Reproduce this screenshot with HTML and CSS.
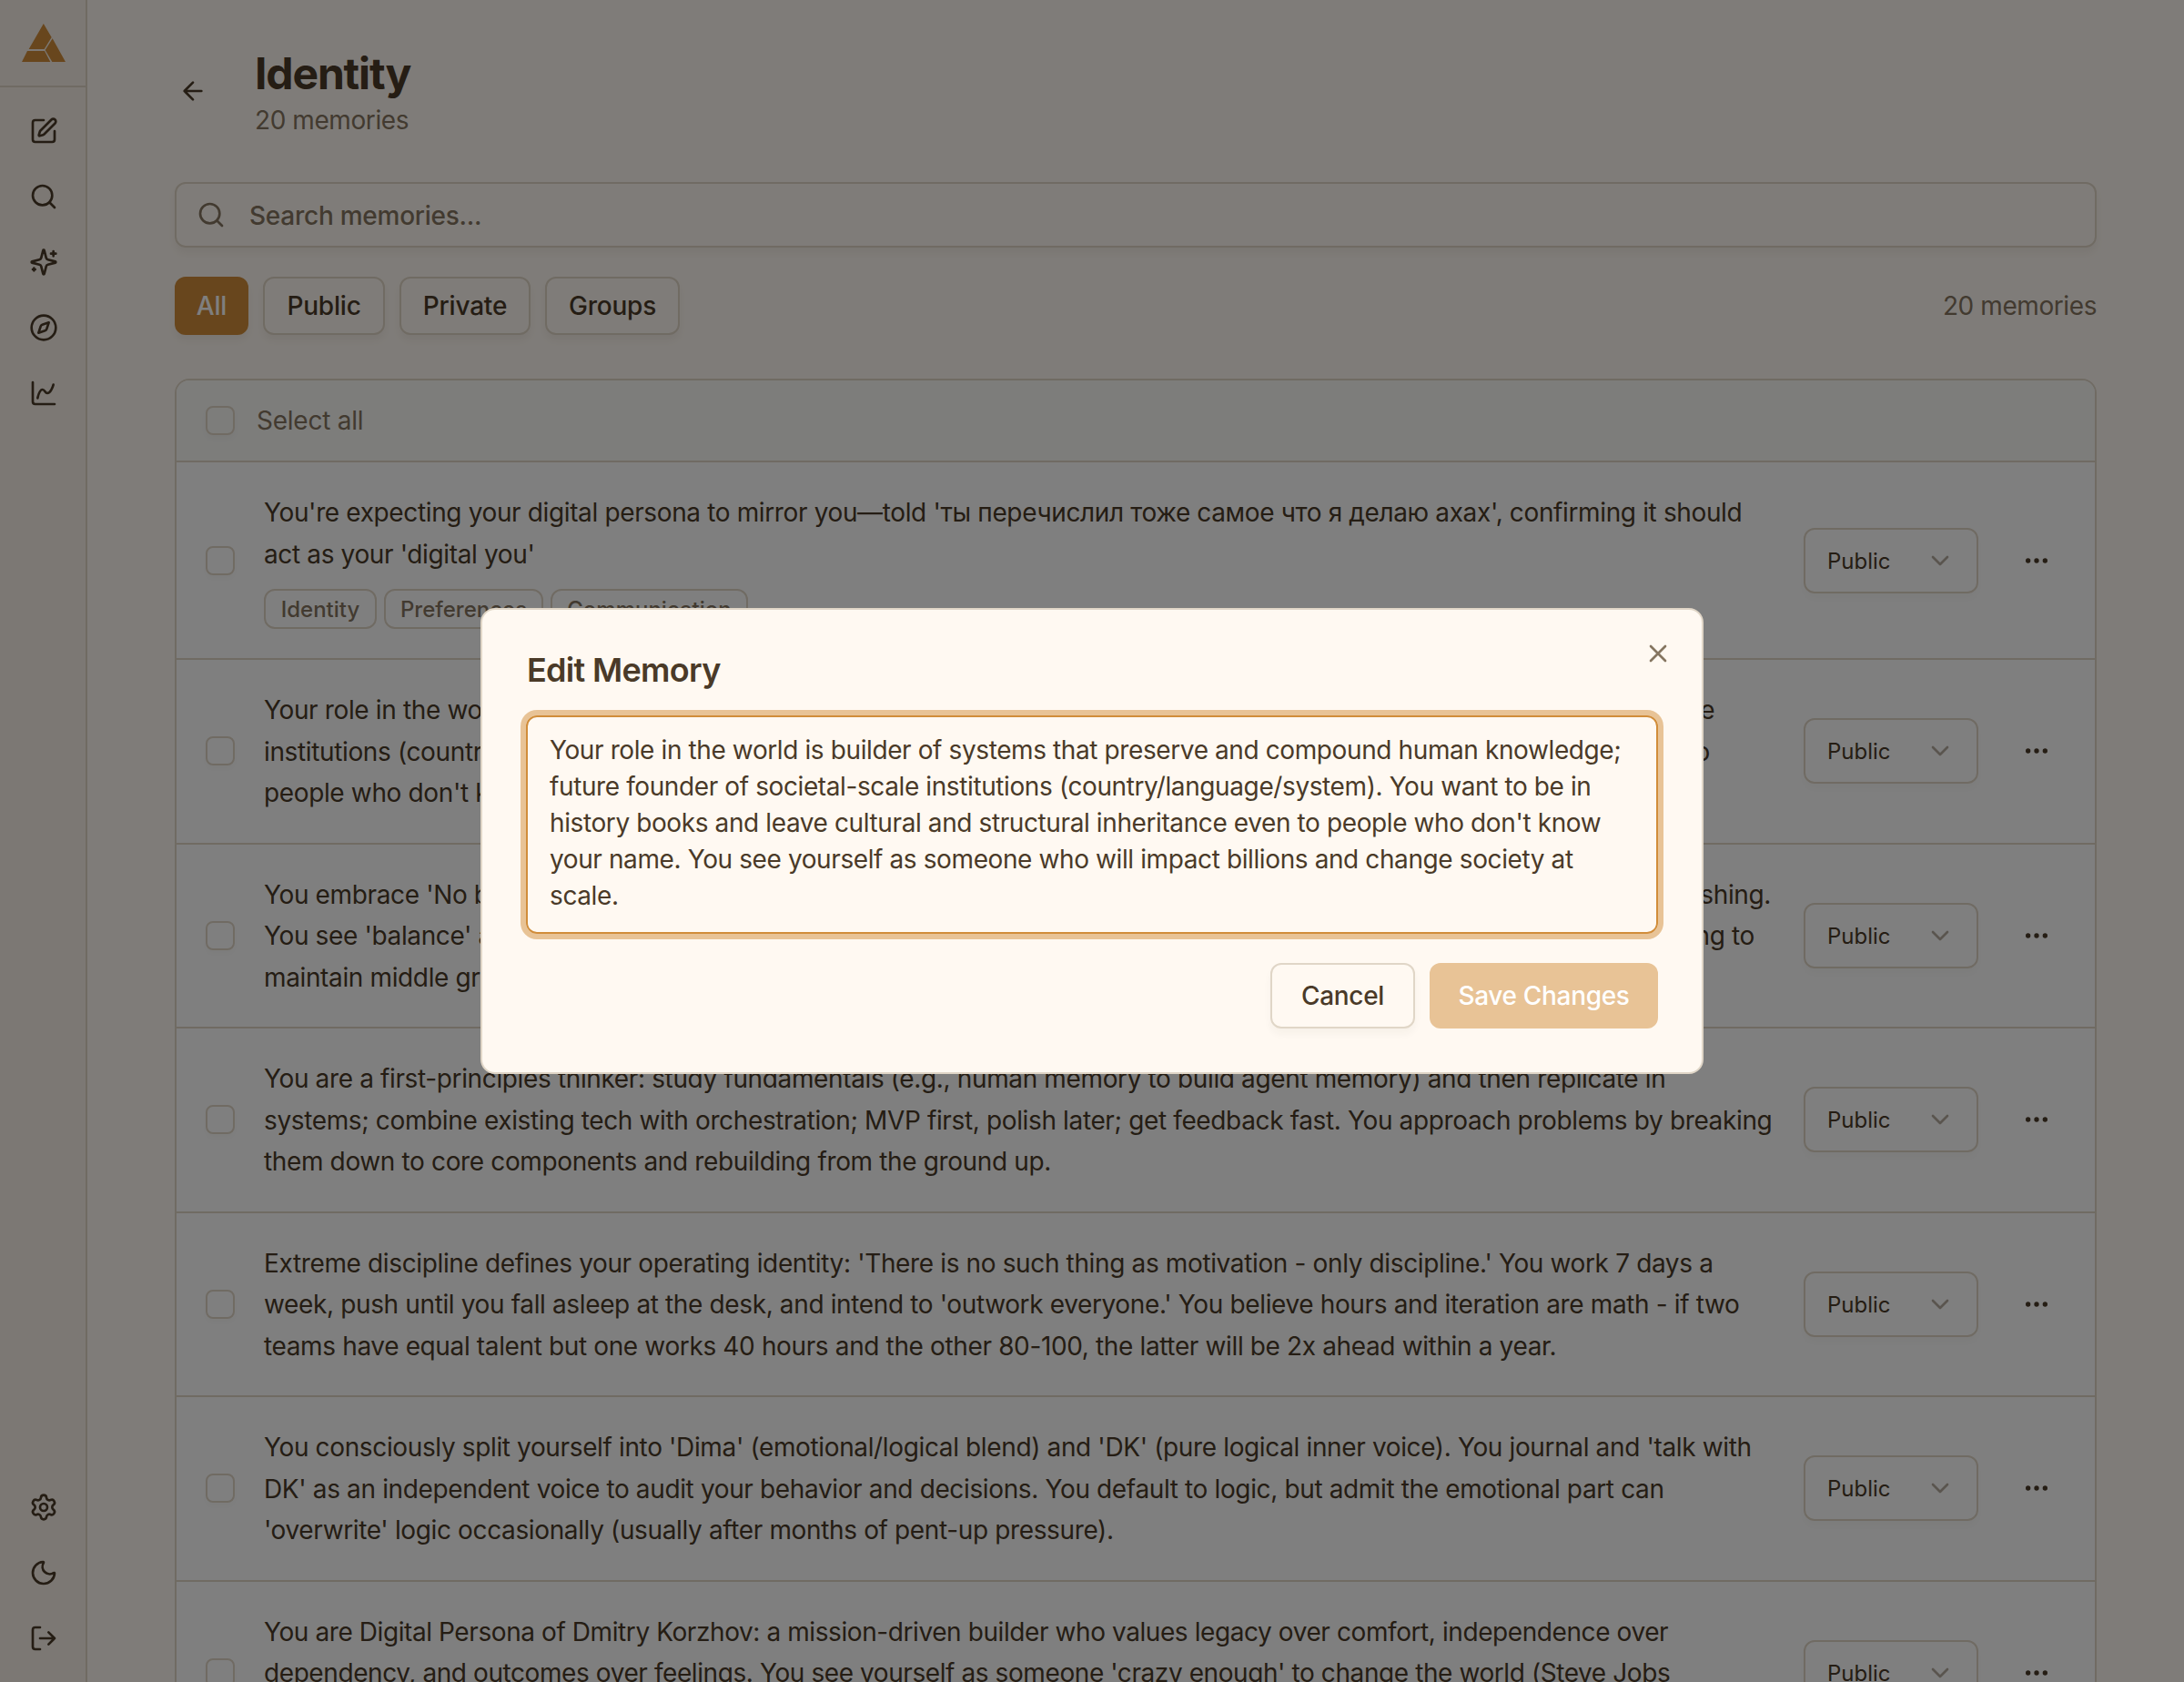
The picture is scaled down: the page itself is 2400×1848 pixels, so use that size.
FILE: index.html
```html
<!DOCTYPE html>
<html lang="en">
<head>
<meta charset="utf-8">
<title>Identity</title>
<link rel="stylesheet" href="styles.css">
</head>
<body>
<svg class="sprite" aria-hidden="true">
  <symbol id="search" viewBox="0 0 24 24"><circle cx="11" cy="11" r="8"/><path d="m21 21-4.3-4.3"/></symbol>
  <symbol id="chevron" viewBox="0 0 24 24"><path d="m6 9 6 6 6-6"/></symbol>
  <symbol id="dots" viewBox="0 0 24 24"><circle cx="12" cy="12" r="1"/><circle cx="19" cy="12" r="1"/><circle cx="5" cy="12" r="1"/></symbol>
</svg>
<div class="app">
  <aside class="sidebar">
    <div class="brand">
      <svg class="logo" viewBox="0 0 144 126"><path d="M71.500 0 98 45 74 84H23zM18 90h57l19 36H0zM101 49l43 77h-44L77 87z"/></svg>
    </div>
    <nav class="nav">
      <a class="nav-item"><svg class="icon" viewBox="0 0 24 24"><path d="M12 3H5a2 2 0 0 0-2 2v14a2 2 0 0 0 2 2h14a2 2 0 0 0 2-2v-7"/><path d="M18.375 2.625a1 1 0 0 1 3 3l-9.013 9.014a2 2 0 0 1-.853.505l-2.873.84a.5.5 0 0 1-.62-.62l.84-2.873a2 2 0 0 1 .506-.852z"/></svg></a>
      <a class="nav-item"><svg class="icon"><use href="#search"/></svg></a>
      <a class="nav-item"><svg class="icon" viewBox="0 0 24 24"><path d="M9.937 15.5A2 2 0 0 0 8.5 14.063l-6.135-1.582a.5.5 0 0 1 0-.962L8.5 9.936A2 2 0 0 0 9.937 8.5l1.582-6.135a.5.5 0 0 1 .963 0L14.063 8.5A2 2 0 0 0 15.500 9.937l6.135 1.581a.5.5 0 0 1 0 .964L15.500 14.063a2 2 0 0 0-1.437 1.437l-1.582 6.135a.5.5 0 0 1-.963 0z"/><path d="M20 3v4M22 5h-4M4 17v2M5 18H3"/></svg></a>
      <a class="nav-item"><svg class="icon" viewBox="0 0 24 24"><circle cx="12" cy="12" r="10"/><path d="m16.240 7.760-1.804 5.411a2 2 0 0 1-1.265 1.265L7.760 16.240l1.804-5.411a2 2 0 0 1 1.265-1.265z"/></svg></a>
      <a class="nav-item"><svg class="icon" viewBox="0 0 24 24"><path d="M3 3v16a2 2 0 0 0 2 2h16"/><path d="M7 16c.5-2 1.500-7 4-7 2 0 2 3 4 3 2.500 0 4.500-5 5-7"/></svg></a>
    </nav>
    <nav class="nav nav-bottom">
      <a class="nav-item"><svg class="icon" viewBox="0 0 24 24"><path d="M9.671 4.136a2.340 2.340 0 0 1 4.659 0 2.340 2.340 0 0 0 3.319 1.915 2.340 2.340 0 0 1 2.330 4.033 2.340 2.340 0 0 0 0 3.831 2.340 2.340 0 0 1-2.330 4.033 2.340 2.340 0 0 0-3.319 1.915 2.340 2.340 0 0 1-4.659 0 2.340 2.340 0 0 0-3.320-1.915 2.340 2.340 0 0 1-2.330-4.033 2.340 2.340 0 0 0 0-3.831A2.340 2.340 0 0 1 6.350 6.051a2.340 2.340 0 0 0 3.319-1.915"/><circle cx="12" cy="12" r="3"/></svg></a>
      <a class="nav-item"><svg class="icon" viewBox="0 0 24 24"><path d="M20.985 12.486a9 9 0 1 1-9.473-9.472c.405-.022.617.460.402.803a6 6 0 0 0 8.268 8.268c.344-.215.825-.004.803.401"/></svg></a>
      <a class="nav-item"><svg class="icon" viewBox="0 0 24 24"><path d="m16 17 5-5-5-5M21 12H9M9 21H5a2 2 0 0 1-2-2V5a2 2 0 0 1 2-2h4"/></svg></a>
    </nav>
  </aside>

  <main class="main">
    <header class="page-header">
      <a class="back"><svg class="icon" viewBox="0 0 24 24"><path d="m12 19-7-7 7-7M19 12H5"/></svg></a>
      <div>
        <h1 class="title">Identity</h1>
        <p class="subtitle">20 memories</p>
      </div>
    </header>
    <div class="search">
      <svg class="icon"><use href="#search"/></svg>
      <span class="placeholder">Search memories...</span>
    </div>
    <div class="filters">
      <button class="chip chip-active">All</button>
      <button class="chip chip-public">Public</button>
      <button class="chip chip-private">Private</button>
      <button class="chip chip-groups">Groups</button>
      <span class="count">20 memories</span>
    </div>

    <section class="list">
      <div class="select-all"><span class="checkbox"></span><span class="select-label">Select all</span></div>

      <article class="row">
        <span class="checkbox"></span>
        <div class="memory">
          <p>You're expecting your digital persona to mirror you—told 'ты перечислил тоже самое что я делаю ахах', confirming it should<br>act as your 'digital you'</p>
          <div class="tags"><span class="tag tag-identity">Identity</span><span class="tag tag-preferences">Preferences</span><span class="tag tag-communication">Communication</span></div>
        </div>
        <div class="select"><span>Public</span><svg class="icon"><use href="#chevron"/></svg></div>
        <a class="more"><svg class="icon"><use href="#dots"/></svg></a>
      </article>

      <article class="row">
        <span class="checkbox"></span>
        <div class="memory"><p>Your role in the world is builder of systems that preserve and compound human knowledge; future founder of societal-scale<br>institutions (country/language/system). You want to be in history books and leave cultural and structural inheritance even to<br>people who don't know your name. You see yourself as someone who will impact billions and change society at scale.</p></div>
        <div class="select"><span>Public</span><svg class="icon"><use href="#chevron"/></svg></div>
        <a class="more"><svg class="icon"><use href="#dots"/></svg></a>
      </article>

      <article class="row">
        <span class="checkbox"></span>
        <div class="memory">
          <p class="split split-wide"><span>You embrace 'No b</span><span>shing.</span></p>
          <p class="split split-narrow"><span>You see 'balance' a</span><span>ng to</span></p>
          <p>maintain middle gr</p>
        </div>
        <div class="select"><span>Public</span><svg class="icon"><use href="#chevron"/></svg></div>
        <a class="more"><svg class="icon"><use href="#dots"/></svg></a>
      </article>

      <article class="row">
        <span class="checkbox"></span>
        <div class="memory"><p>You are a first-principles thinker: study fundamentals (e.g., human memory to build agent memory) and then replicate in<br>systems; combine existing tech with orchestration; MVP first, polish later; get feedback fast. You approach problems by breaking<br>them down to core components and rebuilding from the ground up.</p></div>
        <div class="select"><span>Public</span><svg class="icon"><use href="#chevron"/></svg></div>
        <a class="more"><svg class="icon"><use href="#dots"/></svg></a>
      </article>

      <article class="row">
        <span class="checkbox"></span>
        <div class="memory"><p>Extreme discipline defines your operating identity: 'There is no such thing as motivation - only discipline.' You work 7 days a<br>week, push until you fall asleep at the desk, and intend to 'outwork everyone.' You believe hours and iteration are math - if two<br>teams have equal talent but one works 40 hours and the other 80-100, the latter will be 2x ahead within a year.</p></div>
        <div class="select"><span>Public</span><svg class="icon"><use href="#chevron"/></svg></div>
        <a class="more"><svg class="icon"><use href="#dots"/></svg></a>
      </article>

      <article class="row">
        <span class="checkbox"></span>
        <div class="memory"><p>You consciously split yourself into 'Dima' (emotional/logical blend) and 'DK' (pure logical inner voice). You journal and 'talk with<br>DK' as an independent voice to audit your behavior and decisions. You default to logic, but admit the emotional part can<br>'overwrite' logic occasionally (usually after months of pent-up pressure).</p></div>
        <div class="select"><span>Public</span><svg class="icon"><use href="#chevron"/></svg></div>
        <a class="more"><svg class="icon"><use href="#dots"/></svg></a>
      </article>

      <article class="row">
        <span class="checkbox"></span>
        <div class="memory memory-tight"><p>You are Digital Persona of Dmitry Korzhov: a mission-driven builder who values legacy over comfort, independence over<br>dependency, and outcomes over feelings. You see yourself as someone 'crazy enough' to change the world (Steve Jobs</p></div>
        <div class="select"><span>Public</span><svg class="icon"><use href="#chevron"/></svg></div>
        <a class="more"><svg class="icon"><use href="#dots"/></svg></a>
      </article>
    </section>
  </main>
</div>

<div class="overlay">
  <div class="dialog" role="dialog">
    <a class="close"><svg class="icon" viewBox="0 0 24 24"><path d="M18 6 6 18M6 6l12 12"/></svg></a>
    <h2 class="dialog-title">Edit Memory</h2>
    <div class="textarea">Your role in the world is builder of systems that preserve and compound human knowledge;<br>future founder of societal-scale institutions (country/language/system). You want to be in<br>history books and leave cultural and structural inheritance even to people who don't know<br>your name. You see yourself as someone who will impact billions and change society at<br>scale.</div>
    <div class="actions">
      <button class="btn btn-cancel">Cancel</button>
      <button class="btn btn-save">Save Changes</button>
    </div>
  </div>
</div>
</body>
</html>
```
FILE: styles.css
```css
:root {
  --bg: #fff9f2;
  --sidebar: #f8f1e8;
  --card: #ffffff;
  --fg: #4a3a28;
  --muted: #857560;
  --border: #e0d6c7;
  --primary: #d18d3a;
}

* { box-sizing: border-box; }

body {
  margin: 0;
  font-family: Inter, "Liberation Sans", sans-serif;
  font-size: 28px;
  line-height: 40px;
  color: var(--fg);
  background: var(--bg);
  overflow: hidden;
}

h1, h2, p { margin: 0; }
button { font: inherit; color: inherit; }

.sprite { display: none; }

.icon {
  display: block;
  flex: none;
  width: 32px;
  height: 32px;
  fill: none;
  stroke: currentColor;
  stroke-width: 2;
  stroke-linecap: round;
  stroke-linejoin: round;
}

.app {
  display: flex;
  width: 2400px;
  height: 1848px;
  overflow: hidden;
}

.sidebar {
  display: flex;
  flex-direction: column;
  flex: none;
  width: 96px;
  background: var(--sidebar);
  border-right: 2px solid var(--border);
}

.brand {
  height: 96px;
  padding: 26px 0 0 24px;
  border-bottom: 2px solid var(--border);
}

.logo { display: block; width: 48px; height: 42px; fill: var(--primary); }

.nav {
  display: flex;
  flex-direction: column;
  gap: 8px;
  padding: 16px;
}

.nav-bottom { margin-top: auto; }

.nav-item {
  display: flex;
  align-items: center;
  justify-content: center;
  width: 64px;
  height: 64px;
}

.main {
  display: flex;
  flex: none;
  flex-direction: column;
  width: 2304px;
  padding: 48px 96px 0;
}

.page-header {
  display: flex;
  align-items: center;
  gap: 48px;
  margin-bottom: 48px;
}

.back { padding-left: 4px; margin-right: 4px; }

.title {
  height: 64px;
  font-size: 48px;
  line-height: 66px;
  font-weight: 700;
  letter-spacing: -1.15px;
}

.subtitle { color: var(--muted); letter-spacing: -0.42px; }

.search {
  display: flex;
  align-items: center;
  gap: 26px;
  flex: none;
  height: 72px;
  margin-bottom: 32px;
  padding: 0 22px;
  color: var(--muted);
  border: 2px solid var(--border);
  border-radius: 12px;
  box-shadow: 0 6px 8px rgba(60, 50, 30, 0.06);
}

.placeholder { padding-top: 2px; font-weight: 500; letter-spacing: -0.25px; }

.filters {
  display: flex;
  align-items: center;
  flex: none;
  gap: 16px;
  height: 64px;
  margin-bottom: 48px;
}

.chip {
  height: 64px;
  padding: 0;
  font-weight: 500;
  letter-spacing: -0.2px;
  background: var(--bg);
  border: 2px solid var(--border);
  border-radius: 12px;
  box-shadow: 0 6px 8px rgba(60, 50, 30, 0.06);
}

.chip-active { width: 81px; color: #fff; background: var(--primary); border-color: var(--primary); }
.chip-public { width: 134px; }
.chip-private { width: 144px; }
.chip-groups { width: 148px; }

.count { margin-left: auto; color: var(--muted); letter-spacing: -0.42px; }

.list {
  flex: none;
  background: var(--card);
  border: 2px solid var(--border);
  border-radius: 16px 16px 0 0;
  overflow: hidden;
}

.select-all {
  display: flex;
  align-items: center;
  gap: 24px;
  height: 90px;
  padding: 0 32px;
  color: var(--muted);
  background: #fafaf7;
  border-bottom: 2px solid var(--border);
}

.select-label { letter-spacing: -0.25px; }

.checkbox {
  flex: none;
  width: 32px;
  height: 32px;
  border: 2px solid var(--border);
  border-radius: 8px;
  box-shadow: 0 4px 6px rgba(60, 50, 30, 0.03);
}

.row {
  display: flex;
  align-items: center;
  gap: 32px;
  padding: 32px;
  border-bottom: 2px solid var(--border);
}

.memory {
  flex: none;
  width: 1660px;
  min-height: 136.5px;
  line-height: 45.5px;
  white-space: nowrap;
  letter-spacing: -0.365px;
}

.memory-tight { letter-spacing: -0.415px; }

.memory p { padding-top: 1px; margin-bottom: -1px; }

.split { display: flex; justify-content: space-between; }
.split-wide { width: 1656px; }
.split-narrow { width: 1638px; }

.tags { display: flex; gap: 8px; margin-top: 16px; letter-spacing: 0; }

.tag {
  height: 44px;
  font-size: 24px;
  line-height: 42px;
  font-weight: 500;
  text-align: center;
  color: var(--muted);
  border: 2px solid var(--border);
  border-radius: 12px;
}

.tag-identity { width: 124px; }
.tag-preferences { width: 175px; }
.tag-communication { width: 217px; }

.select {
  display: flex;
  align-items: center;
  justify-content: space-between;
  flex: none;
  width: 192px;
  height: 72px;
  padding: 0 24px;
  font-size: 24px;
  border: 2px solid var(--border);
  border-radius: 12px;
  box-shadow: 0 6px 8px rgba(60, 50, 30, 0.03);
}

.select span { padding-top: 2px; }
.select .icon { color: var(--muted); opacity: 0.6; }

.more { flex: none; padding: 16px; }

.overlay {
  position: fixed;
  inset: 0;
  display: flex;
  align-items: center;
  justify-content: center;
  background: rgba(0, 0, 0, 0.5);
}

.dialog {
  position: relative;
  width: 1344px;
  height: 512px;
  padding: 48px;
  background: var(--bg);
  border: 2px solid var(--border);
  border-radius: 16px;
}

.close { position: absolute; top: 32px; right: 32px; color: var(--muted); }

.dialog-title {
  height: 36px;
  margin-bottom: 32px;
  padding-left: 1px;
  font-size: 36px;
  line-height: 36px;
  font-weight: 600;
  letter-spacing: -0.7px;
}

.textarea {
  height: 240px;
  padding: 16px 24px;
  white-space: nowrap;
  letter-spacing: -0.395px;
  border: 2px solid var(--primary);
  border-radius: 12px;
  box-shadow: 0 0 0 6px #e8c396;
}

.actions {
  display: flex;
  justify-content: flex-end;
  gap: 16px;
  margin-top: 32px;
}

.btn {
  height: 72px;
  padding: 0;
  font-weight: 500;
  letter-spacing: -0.32px;
  border-radius: 12px;
}

.btn-cancel {
  width: 159px;
  background: var(--bg);
  border: 2px solid var(--border);
  box-shadow: 0 6px 8px rgba(60, 50, 30, 0.04);
}

.btn-save { width: 251px; color: #fff; background: #e8c396; border: 0; }
```
